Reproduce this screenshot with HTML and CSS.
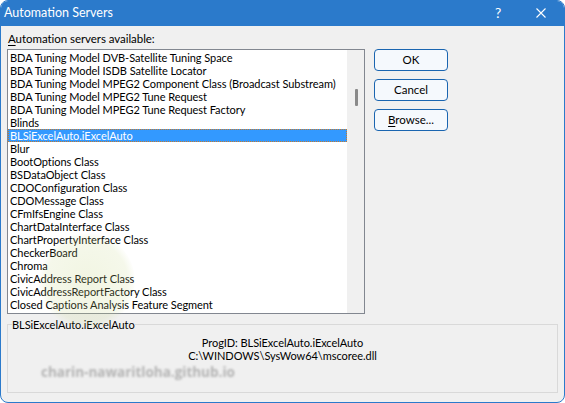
FILE: index.html
```html
<!DOCTYPE html>
<html>
<head>
<meta charset="utf-8">
<link rel="stylesheet" href="styles.css">
</head>
<body>
<div class="window">
  <div class="titlebar">
    <span class="title">Automation Servers</span>
    <span class="help">?</span>
    <span class="close"><svg width="10" height="10" viewBox="0 0 10 10"><path d="M0.5 0.5 L9.5 9.5 M9.5 0.5 L0.5 9.5" stroke="#fff" stroke-width="1.1" fill="none"/></svg></span>
  </div>
  <div class="body">
    <div class="main">
      <div class="left">
        <div class="label"><u>A</u>utomation servers available:</div>
        <div class="listbox">
          <ul class="items">
            <li>BDA Tuning Model DVB-Satellite Tuning Space</li>
            <li>BDA Tuning Model ISDB Satellite Locator</li>
            <li>BDA Tuning Model MPEG2 Component Class (Broadcast Substream)</li>
            <li>BDA Tuning Model MPEG2 Tune Request</li>
            <li>BDA Tuning Model MPEG2 Tune Request Factory</li>
            <li>Blinds</li>
            <li class="selected">BLSiExcelAuto.iExcelAuto</li>
            <li>Blur</li>
            <li>BootOptions Class</li>
            <li>BSDataObject Class</li>
            <li>CDOConfiguration Class</li>
            <li>CDOMessage Class</li>
            <li>CFmIfsEngine Class</li>
            <li>ChartDataInterface Class</li>
            <li>ChartPropertyInterface Class</li>
            <li>CheckerBoard</li>
            <li>Chroma</li>
            <li>CivicAddress Report Class</li>
            <li>CivicAddressReportFactory Class</li>
            <li>Closed Captions Analysis Feature Segment</li>
          </ul>
          <div class="scrollbar"><div class="thumb"></div></div>
        </div>
      </div>
      <div class="buttons">
        <button class="btn">OK</button>
        <button class="btn">Cancel</button>
        <button class="btn"><u>B</u>rowse...</button>
      </div>
    </div>
    <fieldset class="group">
      <legend>BLSiExcelAuto.iExcelAuto</legend>
      <div class="info">
        <div>ProgID: BLSiExcelAuto.iExcelAuto</div>
        <div>C:\WINDOWS\SysWow64\mscoree.dll</div>
      </div>
    </fieldset>
  </div>
  <div class="wm-logo"></div>
  <div class="watermark">charin-nawaritloha.github.io</div>
</div>
</body>
</html>
```
FILE: styles.css
```css
* { box-sizing: border-box; }
html, body { margin: 0; padding: 0; }
body {
  width: 565px;
  height: 403px;
  background: #ffffff;
  font-family: "Lato", "Noto Sans", sans-serif;
  font-size: 11px;
  letter-spacing: -0.05px;
  color: #000;
}
.window {
  position: relative;
  width: 565px;
  height: 403px;
  background: #f0f0f0;
  border: 1px solid #2b7acb;
  border-radius: 8px;
  overflow: hidden;
  display: flex;
  flex-direction: column;
}
.titlebar {
  flex: none;
  background: #2b7acb;
  color: #fff;
  display: flex;
  align-items: center;
  padding-left: 4px;
  margin: -1px -1px 0;
  height: 26px;
}
.title {
  font-size: 12.5px;
  flex: 1;
  padding-bottom: 2px;
  letter-spacing: 0;
}
.help {
  width: 14px;
  text-align: center;
  font-size: 14px;
  margin-right: 31px;
  padding-bottom: 1px;
}
.close {
  width: 10px;
  height: 10px;
  margin-right: 19px;
  display: flex;
}
.body {
  flex: 1;
  display: flex;
  flex-direction: column;
  padding: 5px 6px 0 6px;
}
.main {
  display: flex;
  align-items: flex-start;
}
.left {
  display: flex;
  flex-direction: column;
}
.label {
  line-height: 15px;
  height: 15px;
  margin-bottom: 3px;
  padding-left: 1px;
  font-size: 11.5px;
}
.label u, .btn u { text-decoration: underline; text-underline-offset: 2px; }
.listbox {
  width: 358px;
  height: 265px;
  border: 1px solid #828790;
  background: #fff;
  display: flex;
  overflow: hidden;
}
.items {
  list-style: none;
  margin: 0;
  padding: 1px 0 0 0;
  flex: 1;
  overflow: hidden;
}
.items li {
  height: 13px;
  line-height: 13px;
  padding-left: 2px;
  white-space: nowrap;
  overflow: hidden;
}
.items li.selected {
  background: #3399ff;
  color: #fff;
  outline: 1px dotted #c77a2a;
  outline-offset: -1px;
}
.scrollbar {
  width: 17px;
  flex: none;
  background: #f0f0f0;
  padding-top: 39px;
  display: flex;
  justify-content: center;
}
.thumb {
  width: 3px;
  height: 17px;
  background: #8a8a8a;
  border-radius: 1px;
  margin-left: 1px;
}
.buttons {
  display: flex;
  flex-direction: column;
  gap: 8px;
  margin-left: 9px;
  margin-top: 18px;
}
.btn {
  width: 74px;
  height: 22px;
  font-family: inherit;
  font-size: 11.5px;
  color: #000;
  background: #f5f9fd;
  border: 1px solid #1a65b0;
  border-radius: 4px;
  padding: 0;
  line-height: 18px;
}
.group {
  margin: 3px 1px 0 0;
  width: 551px;
  height: 76px;
  border: 1px solid #d9d9d9;
  padding: 4px 0 0 4px;
}
.group legend {
  padding: 0;
  line-height: 15px;
}
.info {
  text-align: center;
  line-height: 13px;
  padding-right: 4px;
}
.wm-logo {
  position: absolute;
  left: 38px;
  top: 232px;
  width: 96px;
  height: 96px;
  border-radius: 50%;
  background: radial-gradient(circle, rgba(200,215,140,0.25) 0%, rgba(200,215,140,0.18) 60%, rgba(200,215,140,0) 72%);
  pointer-events: none;
}
.watermark {
  position: absolute;
  left: 40px;
  top: 362px;
  font-family: "Open Sans", "Noto Sans", sans-serif;
  font-weight: 700;
  font-size: 13.5px;
  letter-spacing: 0;
  color: rgba(120,120,120,0.5);
  filter: blur(0.8px);
  pointer-events: none;
}
```
